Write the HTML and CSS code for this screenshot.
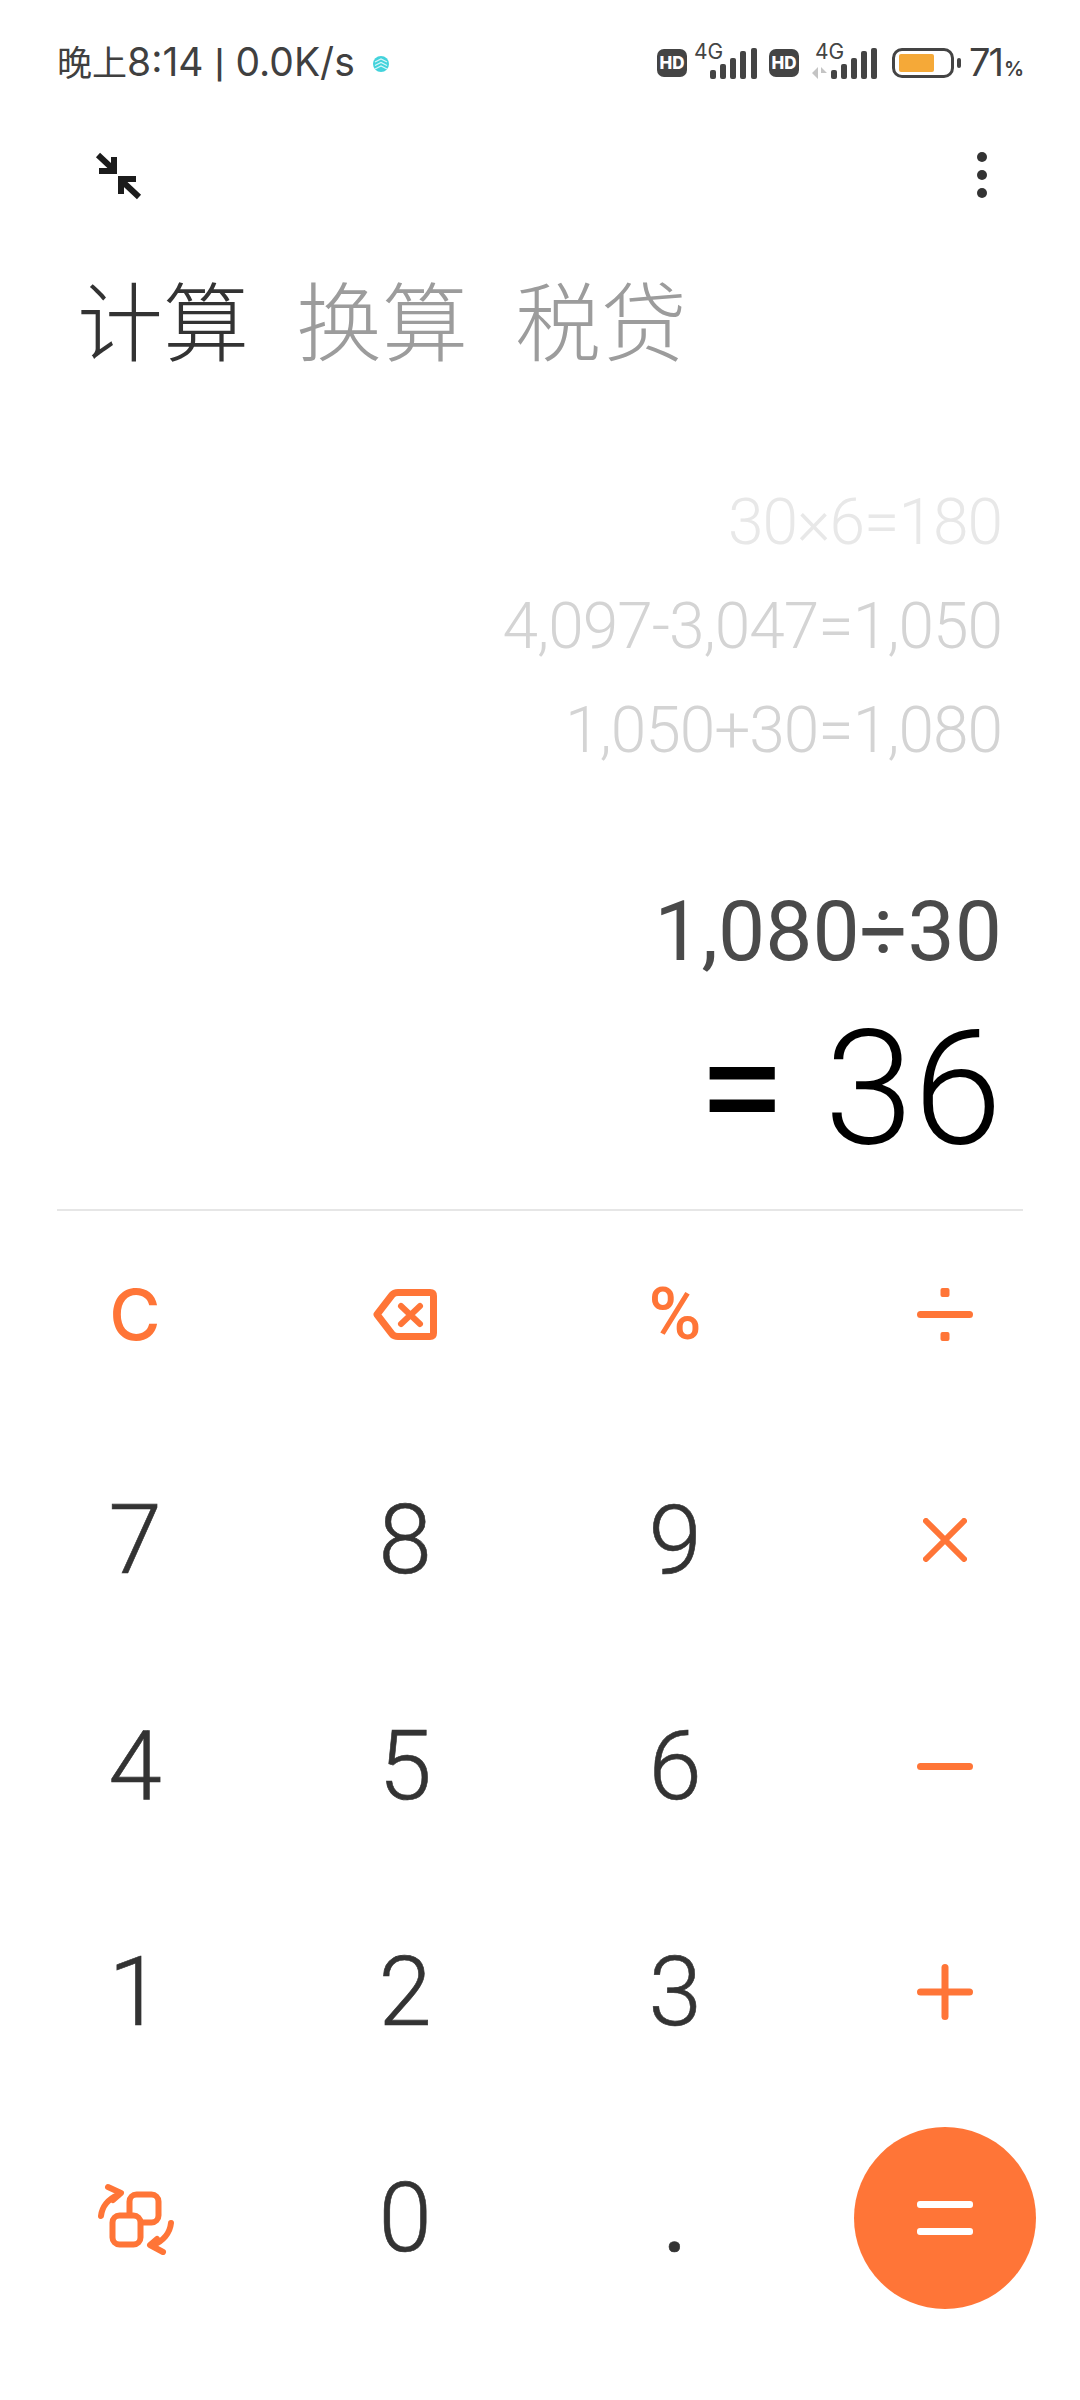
FILE: index.html
```html
<!DOCTYPE html>
<html>

<head>
    <meta charset='UTF-8'>
    <meta name='viewport' content='width=device-width, initial-scale=1.0'>
    <title>计算器</title>
    <link rel="stylesheet" href="styles.css">
</head>

<body>
    <div class="status">
        <div class="status-left">
            <span><span class="cjk">晚上</span>8:14 <span class="sep">|</span> 0.0K/s</span>
            <svg class="mi-logo" width="16" height="16" viewBox="0 0 16 16">
                <circle cx="8" cy="8" r="8" fill="#43d3dc" />
                <path d="M2 6l6-3 6 3M2 9.5l6-3 6 3M2 13l6-3 6 3" fill="none" stroke="#d8f6f8" stroke-width="1.2" />
            </svg>
        </div>
        <div class="status-right">
            <span class="hd">HD</span>
            <div class="signal">
                <span class="net">4G</span>
                <svg width="47" height="36" viewBox="0 0 47 36">
                    <rect x="0" y="27" width="6" height="9" rx="2" />
                    <rect x="10" y="21" width="6" height="15" rx="2" />
                    <rect x="20" y="15" width="6" height="21" rx="2" />
                    <rect x="30" y="8" width="6" height="28" rx="2" />
                    <rect x="41" y="5" width="6" height="31" rx="2" />
                </svg>
            </div>
            <span class="hd">HD</span>
            <div class="signal signal-2">
                <span class="net">4G</span>
                <svg width="65" height="36" viewBox="0 0 65 36">
                    <path d="M0 30l6-6v12zM9 24l6 6h-6zM9 31h0" fill="#c4c4c4" />
                    <rect x="19" y="27" width="6" height="9" rx="2" />
                    <rect x="29" y="21" width="6" height="15" rx="2" />
                    <rect x="39" y="15" width="6" height="21" rx="2" />
                    <rect x="49" y="8" width="6" height="28" rx="2" />
                    <rect x="59" y="5" width="6" height="31" rx="2" />
                </svg>
            </div>
            <div class="battery">
                <div class="battery-fill"></div>
            </div>
            <div class="battery-nub"></div>
            <span class="percent">71<small>%</small></span>
        </div>
    </div>

    <div class="toolbar">
        <svg width="48" height="48" viewBox="0 0 48 48" fill="none" stroke="#1c1c1c" stroke-width="6">
            <path d="M3 3l16 15M4 19h15V5" />
            <path d="M44 45L28 30M41 27H26v15" />
        </svg>
        <svg width="10" height="46" viewBox="0 0 10 46" fill="#333">
            <circle cx="5" cy="5" r="5" />
            <circle cx="5" cy="23" r="5" />
            <circle cx="5" cy="41" r="5" />
        </svg>
    </div>

    <div class="tabs">
        <span class="tab tab-on">计算</span>
        <span class="tab">换算</span>
        <span class="tab">税贷</span>
    </div>

    <div class="display">
        <div class="history h1">30×6=180</div>
        <div class="history h2">4,097-3,047=1,050</div>
        <div class="history h2">1,050+30=1,080</div>
        <div class="expr">1,080÷30</div>
        <div class="result"><span class="result-eq">=</span> 36</div>
    </div>

    <div class="keypad">
        <div class="key op-text">C</div>
        <div class="key">
            <svg width="64" height="51" viewBox="0 0 64 51" fill="none" stroke="#ff7537" stroke-width="7" stroke-linejoin="round" stroke-linecap="round">
                <path d="M25 3.5H57Q60.500 3.500 60.500 7V44Q60.500 47.500 57 47.500H25Q21 47.500 19 45L4 25.500L19 6Q21 3.500 25 3.500Z" />
                <path d="M28 17L47 35M47 17L28 35" stroke-width="6" />
            </svg>
        </div>
        <div class="key op-text pct-key">%</div>
        <div class="key">
            <svg width="56" height="53" viewBox="0 0 56 53" fill="#ff7537">
                <rect x="0" y="23" width="56" height="7" rx="3.500" />
                <rect x="23.500" y="0" width="9" height="9" rx="2" />
                <rect x="23.500" y="44" width="9" height="9" rx="2" />
            </svg>
        </div>

        <div class="key">7</div>
        <div class="key">8</div>
        <div class="key">9</div>
        <div class="key">
            <svg width="44" height="44" viewBox="0 0 44 44" stroke="#ff7537" stroke-width="6" stroke-linecap="round">
                <path d="M3 3L41 41M41 3L3 41" />
            </svg>
        </div>

        <div class="key">4</div>
        <div class="key">5</div>
        <div class="key">6</div>
        <div class="key">
            <svg width="56" height="7" viewBox="0 0 56 7">
                <rect width="56" height="7" rx="3.500" fill="#ff7537" />
            </svg>
        </div>

        <div class="key">1</div>
        <div class="key">2</div>
        <div class="key">3</div>
        <div class="key">
            <svg width="56" height="56" viewBox="0 0 56 56" fill="#ff7537">
                <rect x="0" y="24.500" width="56" height="7" rx="3.500" />
                <rect x="24.500" y="0" width="7" height="56" rx="3.500" />
            </svg>
        </div>

        <div class="key">
            <svg width="80" height="74" viewBox="0 0 80 74" fill="none" stroke="#ff7537" stroke-width="6" stroke-linecap="round" stroke-linejoin="round">
                <rect x="34.500" y="13.500" width="29" height="28" rx="7" />
                <rect x="17.500" y="34.500" width="28" height="29" rx="7" fill="#fff" />
                <path d="M6 35C7 26 13 18 23 14" />
                <path d="M13 6L26 12L18 19" />
                <path d="M76 42C75 52 68 60 58 64" />
                <path d="M68 71L55 64L62 58" />
            </svg>
        </div>
        <div class="key">0</div>
        <div class="key dot-key">.</div>
        <div class="key">
            <div class="equals">
                <svg width="56" height="34" viewBox="0 0 56 34" fill="#fff">
                    <rect y="0" width="56" height="7" rx="3" />
                    <rect y="27" width="56" height="7" rx="3" />
                </svg>
            </div>
        </div>
    </div>
</body>

</html>
```

FILE: styles.css
```css
* {
    box-sizing: border-box;
}

body {
    margin: 0;
    width: 1080px;
    height: 2400px;
    background-color: #fff;
    font-family: "Roboto", "Noto Sans CJK SC", sans-serif;
    color: #333;
    overflow: hidden;
}

/* 状态栏 */
.status {
    height: 124px;
    padding: 38px 56px 0 57px;
    display: flex;
    justify-content: space-between;
    align-items: flex-start;
    font-family: "Inter", "Noto Sans CJK SC", sans-serif;
}

.status-left {
    display: flex;
    align-items: center;
    gap: 18px;
    font-size: 39px;
    line-height: 48px;
    color: #404040;
}

.cjk {
    font-size: 35px;
}

.sep {
    font-size: 28px;
    font-weight: 600;
    vertical-align: 1px;
}

.status-right {
    display: flex;
    align-items: flex-start;
    fill: #444;
}

.hd {
    width: 30px;
    height: 28px;
    margin-top: 11px;
    border-radius: 7px;
    background-color: #444;
    color: #fff;
    font-size: 17px;
    font-weight: 800;
    line-height: 28px;
    text-align: center;
}

.signal {
    position: relative;
    width: 47px;
    height: 42px;
    margin-left: 23px;
    margin-right: 12px;
    padding-top: 5px;
}

.signal-2 {
    width: 65px;
    margin-left: 13px;
    margin-right: 15px;
}

.net {
    position: absolute;
    top: 3px;
    left: -16px;
    font-size: 21px;
    line-height: 22px;
    color: #444;
}

.signal-2 .net {
    left: 3px;
}

.battery {
    width: 62px;
    height: 30px;
    margin-top: 10px;
    border: 3px solid #444;
    border-radius: 10px;
    padding: 3px 4px;
}

.battery-fill {
    width: 35px;
    height: 18px;
    background-color: #f5a938;
    border-radius: 2px;
}

.battery-nub {
    width: 4px;
    height: 10px;
    margin: 20px 8px 0 3px;
    border-radius: 2px;
    background-color: #444;
}

.percent {
    font-size: 38px;
    line-height: 48px;
    letter-spacing: -2px;
    color: #404040;
}

.percent small {
    font-size: 20px;
    font-weight: 600;
    letter-spacing: 0;
    margin-left: 2px;
}

/* 顶部按钮 */
.toolbar {
    height: 104px;
    padding: 28px 93px 0 95px;
    display: flex;
    justify-content: space-between;
    align-items: flex-start;
}

/* 切换页签 */
.tabs {
    height: 243px;
    padding: 40px 0 0 77px;
    display: flex;
    gap: 47px;
    font-size: 86px;
    line-height: 100px;
    font-weight: 300;
    font-family: "Noto Sans CJK SC", sans-serif;
}

.tab {
    color: #9c9c9c;
}

.tab-on {
    color: #333;
}

/* 显示区 */
.display {
    height: 741px;
    padding: 0 78px 0 57px;
    text-align: right;
}

.history {
    height: 104px;
    font-size: 64px;
    line-height: 104px;
    font-weight: 300;
    letter-spacing: -1px;
    white-space: nowrap;
}

.h1 {
    color: #e8e8e8;
}

.h2 {
    color: #d4d4d4;
}

.expr {
    margin-top: 94px;
    font-size: 84px;
    line-height: 110px;
    font-weight: 400;
    color: #4a4a4a;
}

.result {
    margin-top: 12px;
    font-size: 160px;
    line-height: 180px;
    font-weight: 300;
    color: #000;
}

.result-eq {
    font-weight: 400;
}

/* 键盘 */
.keypad {
    position: relative;
    display: grid;
    grid-template-columns: repeat(4, 270px);
    grid-template-rows: repeat(5, 204px);
    row-gap: 22px;
}

.keypad::before {
    content: "";
    position: absolute;
    top: -3px;
    left: 57px;
    right: 57px;
    height: 2px;
    background-color: #e6e6e6;
}

.key {
    display: flex;
    align-items: center;
    justify-content: center;
    font-size: 96px;
    font-weight: 300;
    -webkit-text-stroke: 0.6px #333;
    color: #333;
}

.op-text {
    color: #ff7537;
    -webkit-text-stroke: 0;
    font-family: "Inter", sans-serif;
    font-weight: 500;
    font-size: 70px;
}

.pct-key {
    font-family: "Roboto", sans-serif;
    font-weight: 500;
    font-size: 72px;
}

.dot-key {
    font-weight: 400;
}

.equals {
    width: 182px;
    height: 182px;
    border-radius: 50%;
    background-color: #ff7537;
    display: flex;
    align-items: center;
    justify-content: center;
}
```
